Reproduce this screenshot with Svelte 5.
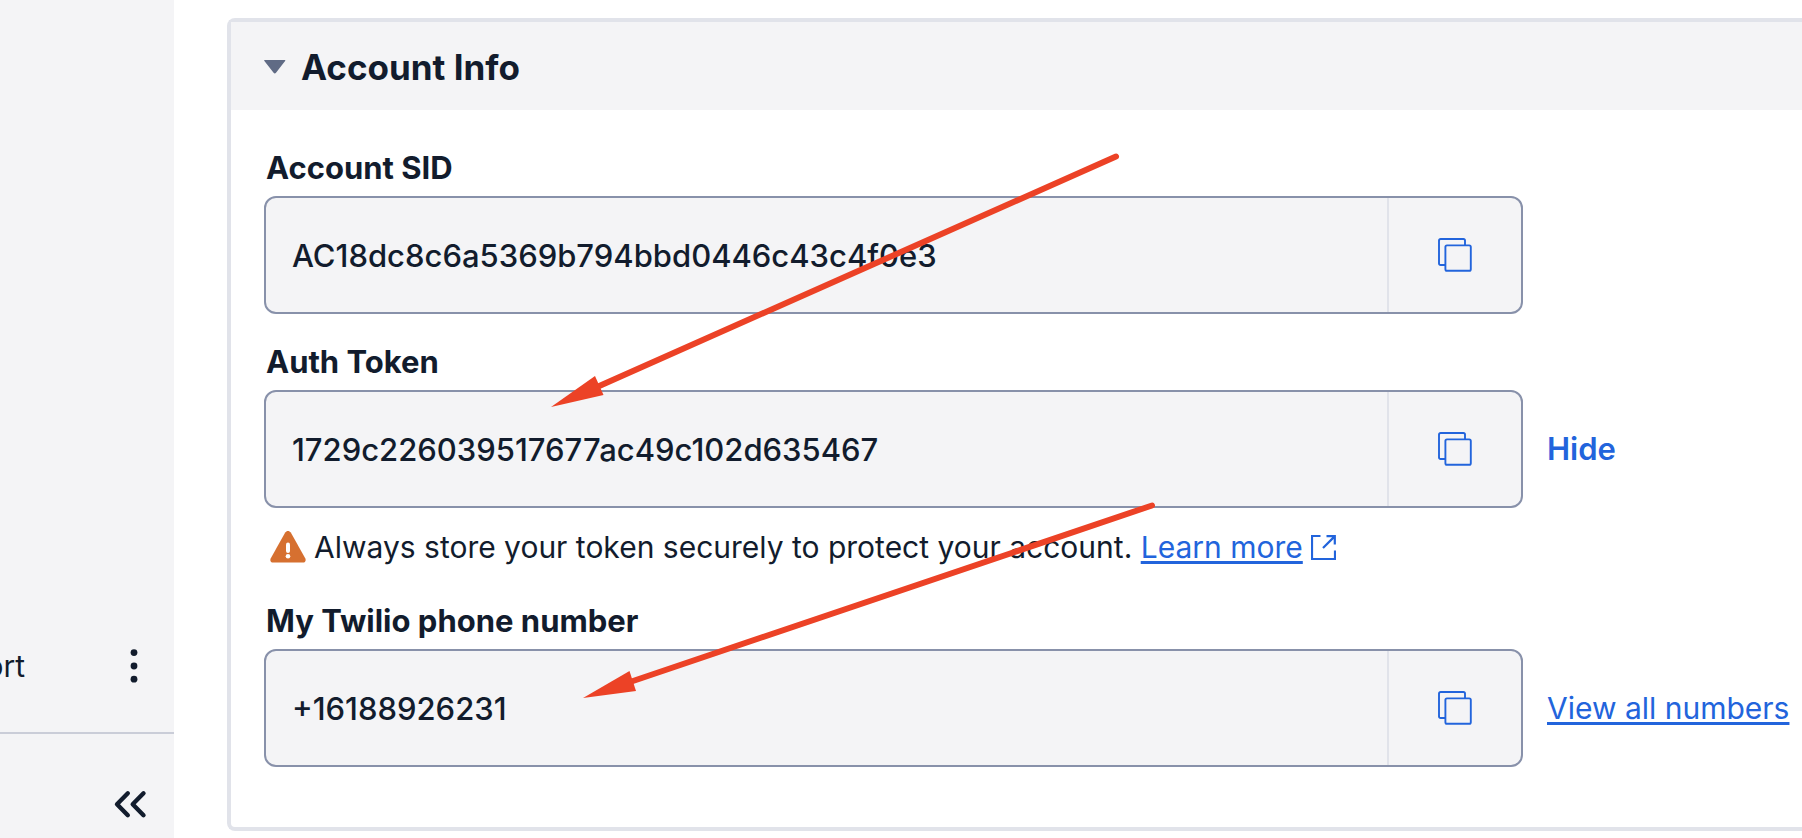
<script>
  let open = $state(true);

  const fields = [
    { id: 'sid', label: 'Account SID', value: 'AC18dc8c6a5369b794bbd0446c43c4f0e3' },
    { id: 'token', label: 'Auth Token', value: '1729c226039517677ac49c102d635467', hide: true, warning: true },
    { id: 'phone', label: 'My Twilio phone number', value: '+16188926231', viewAll: true }
  ];

  function copy(value) {
    navigator.clipboard?.writeText(value);
  }
</script>

<div class="page">
  <aside class="sidebar">
    <div class="nav-item">
      <span class="nav-label">ort</span>
      <button aria-label="More options">
        <svg width="40" height="40" viewBox="0 0 40 40" fill="currentColor">
          <circle cx="20" cy="6.6" r="3.4" />
          <circle cx="20" cy="20" r="3.4" />
          <circle cx="20" cy="33.2" r="3.4" />
        </svg>
      </button>
    </div>
    <div class="collapse">
      <button aria-label="Collapse sidebar">
        <svg width="40" height="40" viewBox="0 0 40 40" fill="none" stroke="currentColor" stroke-width="4.4" stroke-linecap="round" stroke-linejoin="round">
          <path d="M17.8 9.3 7 20.2l10.8 11M33.5 9.3 22.7 20.2l10.8 11" />
        </svg>
      </button>
    </div>
  </aside>

  <main>
    <section class="card">
      <h2>
        <button class="card-toggle" aria-expanded={open} onclick={() => (open = !open)}>
          <svg width="22" height="14" viewBox="0 0 22 14">
            <path d="M.8 0h20c.6 0 .6.6.3 1L12 12.8c-.7.9-1.7.9-2.4 0L.4 1C0 .6.2 0 .8 0Z" fill="#606b85" />
          </svg>
          Account Info
        </button>
      </h2>

      {#if open}
        <div class="card-body">
          {#each fields as field}
            <div class="field">
              <label for={field.id}>{field.label}</label>
              <div class="row">
                <div class="box">
                  <input id={field.id} type="text" value={field.value} readonly />
                  <button class="copy" aria-label="Copy {field.label}" onclick={() => copy(field.value)}>
                    <svg width="34" height="34" viewBox="0 0 34 34" fill="none" stroke="currentColor" stroke-width="1.9">
                      <path d="M7.4 27H2.6A1.6 1.6 0 0 1 1 25.4V2.6A1.6 1.6 0 0 1 2.6 1h22.8A1.6 1.6 0 0 1 27 2.6v4.8" />
                      <rect x="7.4" y="7.4" width="25.4" height="25.4" rx="1.6" />
                    </svg>
                  </button>
                </div>
                {#if field.hide}
                  <button class="hide">Hide</button>
                {/if}
                {#if field.viewAll}
                  <a href="#numbers">View all numbers</a>
                {/if}
              </div>

              {#if field.warning}
                <p class="warning">
                  <svg class="alert" width="36" height="32" viewBox="0 0 36 32">
                    <path d="M15.2 1.6c1.4-2.1 4.2-2.1 5.6 0l14.4 25.6c1.2 2.2 0 4.4-2.4 4.4H3.2C.8 31.6-.4 29.4.8 27.2Z" fill="#d67030" />
                    <path d="M18 13.6v6.4" stroke="#fff" stroke-width="4" stroke-linecap="round" />
                    <circle cx="18" cy="25.3" r="2.3" fill="#fff" />
                  </svg>
                  <span>Always store your token securely to protect your account. <a href="#learn">Learn more</a></span>
                  <svg class="external" width="25" height="25" viewBox="0 0 25 25" fill="none" stroke="currentColor" stroke-width="2.2">
                    <path d="M9.5 1H1v23h23v-8.5M15.5 1.2h8.3v8.3M23.4 1.6 12 13" />
                  </svg>
                </p>
              {/if}
            </div>
          {/each}
        </div>
      {/if}
    </section>
  </main>

  <!-- arrows pointing at the token and the phone number -->
  <svg class="arrows" width="1802" height="838" viewBox="0 0 1802 838" aria-hidden="true">
    <g stroke="#ec4226" stroke-width="6" stroke-linecap="round">
      <path d="M1116 156.5 597 387" />
      <path d="M1152 505.5 630 682" />
    </g>
    <g fill="#ec4226">
      <path d="M551 407 595 376 603.5 395Z" />
      <path d="M583 698 629.5 671 636 691Z" />
    </g>
  </svg>
</div>

<style>
  :global(body) {
    margin: 0;
    background: #fff;
  }

  .page {
    position: relative;
    display: flex;
    min-height: 100vh;
    overflow: hidden;
    color: #121c2d;
    font-family: Inter, 'Liberation Sans', sans-serif;
    font-size: 30px;
    line-height: 36px;
  }

  button {
    padding: 0;
    border: 0;
    background: none;
    color: inherit;
    font: inherit;
    cursor: pointer;
  }

  svg {
    display: block;
    flex: none;
  }

  a {
    color: #2264dc;
    text-decoration-thickness: 3px;
    text-underline-offset: 3px;
    white-space: nowrap;
  }

  .sidebar {
    display: flex;
    flex: none;
    flex-direction: column;
    justify-content: flex-end;
    width: 174px;
    background: #f4f4f6;
  }

  .nav-item {
    display: flex;
    align-items: center;
    justify-content: space-between;
    padding: 46px 20px 46px 0;
    border-bottom: 2px solid #cacdd8;
  }

  /* the sidebar is scrolled, only the end of the label shows */
  .nav-label {
    display: flex;
    justify-content: flex-end;
    width: 25px;
    overflow: hidden;
  }

  .collapse {
    display: flex;
    justify-content: flex-end;
    padding: 50px 24px 14px;
  }

  main {
    flex: 1;
    min-width: 0;
    padding: 18px 0 7px 53px;
  }

  .card {
    border: 4px solid #e1e3ea;
    border-right: 0;
    border-radius: 8px 0 0 8px;
  }

  h2 {
    margin: 0;
    background: #f4f4f6;
    font-size: 35px;
    line-height: 40px;
  }

  .card-toggle {
    display: flex;
    align-items: center;
    gap: 15px;
    width: 100%;
    padding: 25px 33px 23px;
    font-weight: 700;
  }

  .card-body {
    display: flex;
    flex-direction: column;
    gap: 30px;
    padding: 40px 14px 60px 33px;
  }

  .row {
    display: grid;
    grid-template-columns: minmax(0, 1fr) 241px;
    gap: 24px;
    align-items: center;
  }

  label {
    display: block;
    margin-bottom: 10px;
    padding-left: 2px;
    font-size: 31px;
    font-weight: 700;
  }

  .box {
    display: flex;
    height: 118px;
    box-sizing: border-box;
    border: 2px solid #8891aa;
    border-radius: 12px;
    background: #f4f4f6;
    overflow: hidden;
  }

  input {
    flex: 1;
    min-width: 0;
    padding: 2px 26px 0;
    border: 0;
    background: none;
    color: inherit;
    font: inherit;
    font-size: 31px;
    font-weight: 500;
    outline: none;
  }

  .copy {
    display: flex;
    align-items: center;
    justify-content: center;
    width: 134px;
    border-left: 2px solid #e1e3ea;
    color: #2264dc;
  }

  .hide {
    justify-self: start;
    color: #2264dc;
    font-size: 31px;
    font-weight: 600;
  }

  .warning {
    display: flex;
    align-items: center;
    margin: 21px 0 8px;
    padding-left: 6px;
  }

  .alert {
    margin-right: 8px;
  }

  .external {
    margin-left: 8px;
    color: #2264dc;
  }

  .arrows {
    position: absolute;
    top: 0;
    left: 0;
    pointer-events: none;
  }
</style>
